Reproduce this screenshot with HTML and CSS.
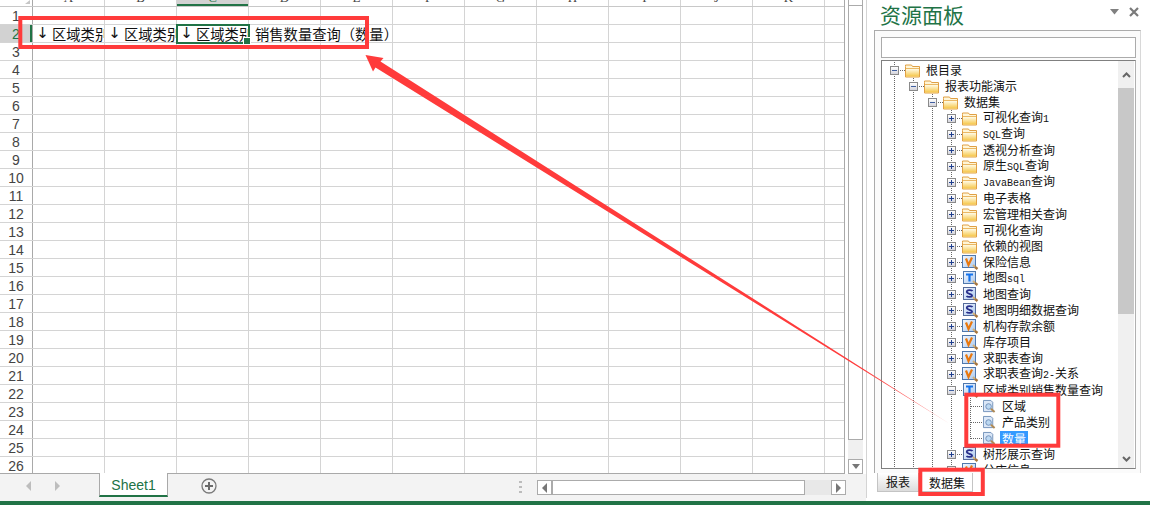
FILE: index.html
```html
<!DOCTYPE html>
<html lang="zh">
<head>
<meta charset="utf-8">
<title>资源面板</title>
<link rel="stylesheet" href="styles.css">
</head>
<body>
<svg class="defs" aria-hidden="true">
  <defs>
    <linearGradient id="fg" x1="0" y1="0" x2="0" y2="1"><stop offset="0" stop-color="#fffbe6"/><stop offset="1" stop-color="#f6c648"/></linearGradient>
    <linearGradient id="bluebg" x1="0" y1="0" x2="1" y2="1"><stop offset="0" stop-color="#f4f8ff"/><stop offset="1" stop-color="#a9c8ee"/></linearGradient>
    <linearGradient id="tail" gradientUnits="userSpaceOnUse" x1="365" y1="55" x2="950" y2="424"><stop offset="0.85" stop-color="#ff3b3b"/><stop offset="1" stop-color="#ff8f8f"/></linearGradient>
    <symbol id="folder" viewBox="0 0 15 15">
      <path d="M.5 3.500V2h6l1 1.500h7v10.500H.5z" fill="#fff6d8" stroke="#e0a045"/>
      <rect x="1" y="6" width="13" height="7.500" fill="url(#fg)"/>
      <path d="M1 5.500h13" stroke="#eab865"/>
    </symbol>
    <symbol id="mag" viewBox="0 0 17 16">
      <path d="M11 11l2 2" stroke="#d2b078" stroke-width="2"/>
      <path d="M13 13l2.500 2" stroke="#a8763c" stroke-width="2.500"/>
    </symbol>
    <symbol id="dv" viewBox="0 0 17 16">
      <rect x=".5" y="1.500" width="13" height="12" fill="url(#bluebg)" stroke="#4f78ad"/>
      <path d="M4 4.500l2.500 6.500 3.500-7.500" fill="none" stroke="#e8780f" stroke-width="2.200"/>
      <use href="#mag"/>
    </symbol>
    <symbol id="dt" viewBox="0 0 17 16">
      <rect x="1.500" y="1.500" width="12" height="12" fill="url(#bluebg)" stroke="#4f78ad"/>
      <path d="M4 4.500h7M7.500 4.500v7" fill="none" stroke="#1473ec" stroke-width="2.200"/>
      <use href="#mag"/>
    </symbol>
    <symbol id="ds" viewBox="0 0 17 16">
      <rect x="1.500" y="1.500" width="12" height="12" fill="url(#bluebg)" stroke="#566c9c"/>
      <path d="M10.500 5c-.5-1-4.500-1.500-5.500 0s1 2.300 2.500 2.800 3 1.400 2.500 2.400-4.500 1.100-5.500-.2" fill="none" stroke="#28308c" stroke-width="1.800"/>
      <use href="#mag"/>
    </symbol>
    <symbol id="field" viewBox="0 0 14 16">
      <path d="M.5 1.500h8l2 2v10h-10z" fill="#dbe7f7" stroke="#6f8fb8"/>
      <circle cx="6" cy="8" r="3" fill="#bcd8f2" stroke="#6f8fb8"/>
      <path d="M8.500 10.500l4 3.500" stroke="#b08a55" stroke-width="2.200"/>
    </symbol>
  </defs>
</svg>

<div class="app">
  <div class="main">
    <section class="workbook">
      <div class="sheet-area">
        <div class="grid">
          <div class="colhead">
            <div class="corner"></div>
            <div class="ch">A</div><div class="ch">B</div><div class="ch active">C</div><div class="ch">D</div><div class="ch">E</div><div class="ch">F</div><div class="ch">G</div><div class="ch">H</div><div class="ch">I</div><div class="ch">J</div><div class="ch">K</div><div class="ch rest"></div>
          </div>
          <div class="rows">
            <div class="row"><div class="rn">1</div><div class="cells"></div></div>
            <div class="row"><div class="rn active">2</div>
              <div class="cells">
                <div class="cell"><span class="clip"><span class="arr">↓</span>区域类别</span></div>
                <div class="cell"><span class="clip"><span class="arr">↓</span>区域类别</span></div>
                <div class="cell current"><span class="clip"><span class="arr">↓</span>区域类别</span><i class="sel"></i></div>
                <div class="cell spill">销售数量查询（数量）</div>
              </div>
            </div>
            <div class="row"><div class="rn">3</div><div class="cells"></div></div>
            <div class="row"><div class="rn">4</div><div class="cells"></div></div>
            <div class="row"><div class="rn">5</div><div class="cells"></div></div>
            <div class="row"><div class="rn">6</div><div class="cells"></div></div>
            <div class="row"><div class="rn">7</div><div class="cells"></div></div>
            <div class="row"><div class="rn">8</div><div class="cells"></div></div>
            <div class="row"><div class="rn">9</div><div class="cells"></div></div>
            <div class="row"><div class="rn">10</div><div class="cells"></div></div>
            <div class="row"><div class="rn">11</div><div class="cells"></div></div>
            <div class="row"><div class="rn">12</div><div class="cells"></div></div>
            <div class="row"><div class="rn">13</div><div class="cells"></div></div>
            <div class="row"><div class="rn">14</div><div class="cells"></div></div>
            <div class="row"><div class="rn">15</div><div class="cells"></div></div>
            <div class="row"><div class="rn">16</div><div class="cells"></div></div>
            <div class="row"><div class="rn">17</div><div class="cells"></div></div>
            <div class="row"><div class="rn">18</div><div class="cells"></div></div>
            <div class="row"><div class="rn">19</div><div class="cells"></div></div>
            <div class="row"><div class="rn">20</div><div class="cells"></div></div>
            <div class="row"><div class="rn">21</div><div class="cells"></div></div>
            <div class="row"><div class="rn">22</div><div class="cells"></div></div>
            <div class="row"><div class="rn">23</div><div class="cells"></div></div>
            <div class="row"><div class="rn">24</div><div class="cells"></div></div>
            <div class="row"><div class="rn">25</div><div class="cells"></div></div>
            <div class="row"><div class="rn">26</div><div class="cells"></div></div>
          </div>
        </div>
        <div class="vscroll">
          <div class="vs-up"></div>
          <div class="vs-thumb"></div>
          <div class="vs-track"></div>
          <div class="sb-btn"><i class="tri down"></i></div>
        </div>
      </div>
      <div class="tabbar">
        <div class="nav"><i class="tri left pale"></i><i class="tri right pale"></i></div>
        <div class="sheet-tab">Sheet1</div>
        <div class="add">
          <svg width="16" height="16" viewBox="0 0 16 16"><circle cx="8" cy="8" r="7" fill="none" stroke="#7a7a7a" stroke-width="1.300"/><path d="M4 8h8M8 4v8" stroke="#6a6a6a" stroke-width="2"/></svg>
        </div>
        <div class="split"><i></i><i></i><i></i></div>
        <div class="hscroll">
          <div class="sb-btn"><i class="tri left"></i></div>
          <div class="hs-thumb"></div>
          <div class="hs-track"></div>
          <div class="sb-btn"><i class="tri right"></i></div>
        </div>
      </div>
    </section>

    <aside class="panel">
      <header class="panel-head">
        <h1 class="panel-title">资源面板</h1>
        <div class="panel-tools">
          <svg width="10" height="6" viewBox="0 0 10 6"><path d="M0 0h9L4.500 5.500z" fill="#808080"/></svg>
          <svg width="10" height="10" viewBox="0 0 10 10"><path d="M1 1l8 8M9 1l-8 8" stroke="#7a7a7a" stroke-width="2.200"/></svg>
        </div>
      </header>
      <div class="panel-box">
        <div class="search"></div>
        <div class="tree">
          <div class="tree-list">
            <div class="node"><span class="tw"><b class="exp minus"></b></span><span class="conn"></span><svg class="ic"><use href="#folder"/></svg><span class="lb">根目录</span></div>
            <div class="node"><span class="g"></span><span class="tw"><b class="exp minus"></b></span><span class="conn"></span><svg class="ic"><use href="#folder"/></svg><span class="lb">报表功能演示</span></div>
            <div class="node"><span class="g"></span><span class="g"></span><span class="tw"><b class="exp minus"></b></span><span class="conn"></span><svg class="ic"><use href="#folder"/></svg><span class="lb">数据集</span></div>
            <div class="node"><span class="g"></span><span class="g"></span><span class="g"></span><span class="tw"><b class="exp"></b></span><span class="conn"></span><svg class="ic"><use href="#folder"/></svg><span class="lb">可视化查询<span class="lat">1</span></span></div>
            <div class="node"><span class="g"></span><span class="g"></span><span class="g"></span><span class="tw"><b class="exp"></b></span><span class="conn"></span><svg class="ic"><use href="#folder"/></svg><span class="lb"><span class="lat">SQL</span>查询</span></div>
            <div class="node"><span class="g"></span><span class="g"></span><span class="g"></span><span class="tw"><b class="exp"></b></span><span class="conn"></span><svg class="ic"><use href="#folder"/></svg><span class="lb">透视分析查询</span></div>
            <div class="node"><span class="g"></span><span class="g"></span><span class="g"></span><span class="tw"><b class="exp"></b></span><span class="conn"></span><svg class="ic"><use href="#folder"/></svg><span class="lb">原生<span class="lat">SQL</span>查询</span></div>
            <div class="node"><span class="g"></span><span class="g"></span><span class="g"></span><span class="tw"><b class="exp"></b></span><span class="conn"></span><svg class="ic"><use href="#folder"/></svg><span class="lb"><span class="lat">JavaBean</span>查询</span></div>
            <div class="node"><span class="g"></span><span class="g"></span><span class="g"></span><span class="tw"><b class="exp"></b></span><span class="conn"></span><svg class="ic"><use href="#folder"/></svg><span class="lb">电子表格</span></div>
            <div class="node"><span class="g"></span><span class="g"></span><span class="g"></span><span class="tw"><b class="exp"></b></span><span class="conn"></span><svg class="ic"><use href="#folder"/></svg><span class="lb">宏管理相关查询</span></div>
            <div class="node"><span class="g"></span><span class="g"></span><span class="g"></span><span class="tw"><b class="exp"></b></span><span class="conn"></span><svg class="ic"><use href="#folder"/></svg><span class="lb">可视化查询</span></div>
            <div class="node"><span class="g"></span><span class="g"></span><span class="g"></span><span class="tw"><b class="exp"></b></span><span class="conn"></span><svg class="ic"><use href="#folder"/></svg><span class="lb">依赖的视图</span></div>
            <div class="node"><span class="g"></span><span class="g"></span><span class="g"></span><span class="tw"><b class="exp"></b></span><span class="conn"></span><svg class="ic data"><use href="#dv"/></svg><span class="lb">保险信息</span></div>
            <div class="node"><span class="g"></span><span class="g"></span><span class="g"></span><span class="tw"><b class="exp"></b></span><span class="conn"></span><svg class="ic data"><use href="#dt"/></svg><span class="lb">地图<span class="lat">sql</span></span></div>
            <div class="node"><span class="g"></span><span class="g"></span><span class="g"></span><span class="tw"><b class="exp"></b></span><span class="conn"></span><svg class="ic data"><use href="#ds"/></svg><span class="lb">地图查询</span></div>
            <div class="node"><span class="g"></span><span class="g"></span><span class="g"></span><span class="tw"><b class="exp"></b></span><span class="conn"></span><svg class="ic data"><use href="#ds"/></svg><span class="lb">地图明细数据查询</span></div>
            <div class="node"><span class="g"></span><span class="g"></span><span class="g"></span><span class="tw"><b class="exp"></b></span><span class="conn"></span><svg class="ic data"><use href="#dv"/></svg><span class="lb">机构存款余额</span></div>
            <div class="node"><span class="g"></span><span class="g"></span><span class="g"></span><span class="tw"><b class="exp"></b></span><span class="conn"></span><svg class="ic data"><use href="#dv"/></svg><span class="lb">库存项目</span></div>
            <div class="node"><span class="g"></span><span class="g"></span><span class="g"></span><span class="tw"><b class="exp"></b></span><span class="conn"></span><svg class="ic data"><use href="#dv"/></svg><span class="lb">求职表查询</span></div>
            <div class="node"><span class="g"></span><span class="g"></span><span class="g"></span><span class="tw"><b class="exp"></b></span><span class="conn"></span><svg class="ic data"><use href="#dv"/></svg><span class="lb">求职表查询<span class="lat">2-</span>关系</span></div>
            <div class="node"><span class="g"></span><span class="g"></span><span class="g"></span><span class="tw"><b class="exp minus"></b></span><span class="conn"></span><svg class="ic data"><use href="#dt"/></svg><span class="lb">区域类别销售数量查询</span></div>
            <div class="node"><span class="g"></span><span class="g"></span><span class="g"></span><span class="g"></span><span class="g leaf"></span><svg class="ic small"><use href="#field"/></svg><span class="lb">区域</span></div>
            <div class="node"><span class="g"></span><span class="g"></span><span class="g"></span><span class="g"></span><span class="g leaf"></span><svg class="ic small"><use href="#field"/></svg><span class="lb">产品类别</span></div>
            <div class="node"><span class="g"></span><span class="g"></span><span class="g"></span><span class="g"></span><span class="g leaf end"></span><svg class="ic small"><use href="#field"/></svg><span class="lb selected">数量</span></div>
            <div class="node"><span class="g"></span><span class="g"></span><span class="g"></span><span class="tw"><b class="exp"></b></span><span class="conn"></span><svg class="ic data"><use href="#ds"/></svg><span class="lb">树形展示查询</span></div>
            <div class="node"><span class="g"></span><span class="g"></span><span class="g"></span><span class="tw"><b class="exp"></b></span><span class="conn"></span><svg class="ic data"><use href="#dv"/></svg><span class="lb">分店信息</span></div>
          </div>
          <div class="tree-scroll">
            <div class="ts-btn"><svg width="9" height="6" viewBox="0 0 9 6"><path d="M1 5l3.500-3.500L8 5" fill="none" stroke="#666" stroke-width="2"/></svg></div>
            <div class="ts-thumb"></div>
            <div class="ts-rest"></div>
            <div class="ts-btn low"><svg width="9" height="6" viewBox="0 0 9 6"><path d="M1 1l3.500 3.500L8 1" fill="none" stroke="#666" stroke-width="2"/></svg></div>
          </div>
        </div>
      </div>
      <div class="panel-tabs">
        <div class="ptab">报表</div>
        <div class="ptab on">数据集</div>
      </div>
    </aside>
  </div>
  <div class="status"></div>

  <svg class="marks" width="1150" height="505" viewBox="0 0 1150 505" aria-hidden="true">
    <rect class="mark" x="20.300" y="18" width="346.700" height="29"/>
    <rect class="mark" x="966.300" y="394.700" width="92" height="51"/>
    <rect class="mark" x="920.300" y="469.700" width="62.500" height="24.300"/>
    <path d="M365.500 55L383.500 58l-3 3.500L950 424 375.500 67.500 373 71.500z" fill="url(#tail)"/>
  </svg>
</div>
</body>
</html>
```

FILE: styles.css
```css
* { box-sizing: border-box; }
html, body { margin: 0; padding: 0; background: #fff; }
body { font-family: "Noto Sans CJK SC", "Liberation Sans", sans-serif; color: #111; }
.defs { position: absolute; width: 0; height: 0; }

.app { position: relative; width: 1150px; height: 505px; overflow: hidden; display: flex; flex-direction: column; }
.main { display: flex; height: 501px; }
.status { height: 4px; background: #217346; }
.marks { position: absolute; left: 0; top: 0; pointer-events: none; }
.mark { fill: none; stroke: #ff3b3b; stroke-width: 4; }

/* workbook */
.workbook { width: 866px; display: flex; flex-direction: column; background: #f3f3f3; }
.sheet-area { height: 474px; display: flex; background: #fff; }
.grid { width: 845px; height: 474px; overflow: hidden; border-right: 1px solid #a9a9a9; border-bottom: 1px solid #a9a9a9; }
.colhead { display: flex; height: 7px; overflow: hidden; background: #fff; border-bottom: 1px solid #c8c8c8; }
.corner { width: 33px; flex: none; border-right: 1px solid #a9a9a9; position: relative; }
.corner::after { content: ""; position: absolute; right: 2px; top: 0; border-style: solid; border-width: 0 0 4px 5px; border-color: transparent transparent #c6c6c6 transparent; }
.ch { width: 72px; flex: none; height: 6px; display: flex; align-items: flex-end; justify-content: center; border-right: 1px solid #d4d4d4; font: 13px/12px "Liberation Serif", serif; color: #444; padding-bottom: 2px; }
.ch.rest { width: 20px; border-right: 0; }
.ch.active { background: #d2d2d2; color: #217346; box-shadow: inset 0 -2px 0 #217346; }

.row { display: flex; height: 18px; border-bottom: 1px solid #d4d4d4; }
.rn { width: 33px; flex: none; border-right: 1px solid #a9a9a9; text-align: center; font: 14px/18px "Liberation Sans", sans-serif; color: #444; background: #fff; }
.rn.active { background: #d2d2d2; color: #217346; box-shadow: inset -2px 0 0 #217346; }
.cells { flex: 1; display: flex; background: repeating-linear-gradient(90deg, transparent 0 71px, #d4d4d4 71px 72px); }
.cell { position: relative; flex: none; width: 72px; white-space: nowrap; font-size: 14.3px; line-height: 18px; color: #111; }
.clip { display: block; width: 71px; height: 17px; overflow: hidden; }
.arr { display: inline-block; width: 19px; text-align: center; font: 15px/17px "DejaVu Sans", sans-serif; vertical-align: top; }
.cell.spill { padding-left: 6px; }
.sel { position: absolute; left: -1px; top: -1px; width: 74px; height: 20px; border: 2px solid #217346; }
.sel::after { content: ""; position: absolute; right: -3px; bottom: -3px; width: 6px; height: 6px; background: #217346; border: 1px solid #fff; }

/* scrollbars */
.vscroll { width: 15px; margin-left: 3px; height: 474px; display: flex; flex-direction: column; }
.vs-up { height: 6px; border: 1px solid #ababab; border-top: 0; background: #fff; }
.vs-thumb { height: 434px; border: 1px solid #ababab; border-top: 0; background: #fff; }
.vs-track { flex: 1; background: #f0f0f0; }
.sb-btn { width: 15px; height: 15px; flex: none; border: 1px solid #ababab; background: #fff; display: flex; align-items: center; justify-content: center; }
.tri { display: block; width: 0; height: 0; border-style: solid; }
.tri.down { border-width: 5px 4px 0 4px; border-color: #777 transparent transparent transparent; }
.tri.left { border-width: 5px 5px 5px 0; border-color: transparent #777 transparent transparent; }
.tri.right { border-width: 5px 0 5px 5px; border-color: transparent transparent transparent #777; }
.tri.left.pale { border-color: transparent #bdbdbd transparent transparent; }
.tri.right.pale { border-color: transparent transparent transparent #bdbdbd; }

/* tab bar */
.tabbar { height: 27px; display: flex; align-items: flex-start; }
.nav { width: 99px; height: 24px; flex: none; display: flex; align-items: center; gap: 24px; padding-left: 26px; }
.sheet-tab { width: 69px; height: 24px; flex: none; margin-top: -1px; background: #fff; border-left: 1px solid #a9a9a9; border-right: 1px solid #a9a9a9; border-bottom: 2px solid #217346; text-align: center; font: 14px/24px "Liberation Sans", sans-serif; color: #217346; }
.add { width: 16px; height: 16px; flex: none; margin: 4px 0 0 33px; }
.add svg { display: block; }
.split { width: 3px; height: 12px; flex: none; margin: 7px 0 0 302px; display: flex; flex-direction: column; justify-content: space-between; }
.split i { display: block; height: 2px; background: #bcbcbc; }
.hscroll { width: 309px; height: 15px; flex: none; margin: 6px 0 0 15px; display: flex; }
.hs-thumb { width: 253px; border: 1px solid #ababab; background: #fff; }
.hs-track { flex: 1; background: #e8e8e8; }

/* panel */
.panel { width: 284px; height: 498px; border-left: 1px solid #d4d4d4; background: #fff; position: relative; display: flex; flex-direction: column; padding: 0 9px 0 7px; }
.panel-head { height: 30px; display: flex; justify-content: space-between; padding: 0 2px 0 6px; }
.panel-title { margin: 0; font-size: 21px; font-weight: 400; line-height: 29px; color: #217346; }
.panel-tools { display: flex; align-items: center; gap: 9px; height: 24px; }
.panel-box { height: 443px; border: 1px solid #ababab; border-right-color: #d8d8d8; border-bottom: 0; padding: 6px 4px 5px 6px; background: #fbfbfb; }
.search { height: 21px; border: 1px solid #ababab; background: #fff; margin-bottom: 2px; }
.tree { height: 409px; border: 1px solid #808080; border-right-color: #b0b0b0; background: #fff; display: flex; overflow: hidden; }
.tree-list { flex: 1; min-width: 0; padding: 1px 0 0 8px; overflow: hidden; }
.node { display: flex; align-items: center; height: 16px; white-space: nowrap; font-size: 12px; line-height: 16px; color: #111; }
.g { width: 19px; height: 16px; flex: none; background: repeating-linear-gradient(#666 0 1px, transparent 1px 2px) 4px 0 / 1px 100% no-repeat; }
.g.leaf { width: 17px; position: relative; }
.g.leaf::after { content: ""; position: absolute; left: 5px; top: 8px; width: 12px; height: 1px; background: repeating-linear-gradient(90deg, #666 0 1px, transparent 1px 2px); }
.g.end { background-size: 1px 9px; }
.tw { width: 10px; height: 16px; flex: none; display: flex; align-items: center; background: repeating-linear-gradient(#666 0 1px, transparent 1px 2px) 4px 0 / 1px 100% no-repeat; }
.exp { display: block; width: 9px; height: 9px; border: 1px solid #8a8a8a; background: linear-gradient(#1f3f8f, #1f3f8f) center / 5px 1px no-repeat, linear-gradient(#1f3f8f, #1f3f8f) center / 1px 5px no-repeat, linear-gradient(#fff, #d4d4dc); }
.exp.minus { background: linear-gradient(#3f5f9f, #3f5f9f) center / 5px 1px no-repeat, linear-gradient(#fff, #d4d4dc); }
.conn { width: 5px; height: 1px; flex: none; background: repeating-linear-gradient(90deg, #666 0 1px, transparent 1px 2px); }
.ic { width: 15px; height: 15px; flex: none; display: block; overflow: visible; }
.ic.data { width: 17px; height: 16px; margin-right: -2px; }
.ic.small { width: 13px; height: 15px; }
.lb { margin-left: 6px; }
.lb.selected { margin-left: 4px; padding: 0 2px; background: #3399ff; color: #fff; line-height: 15px; }
.lat { font-family: "Liberation Mono", monospace; font-size: 10px; }
.tree-scroll { width: 16px; flex: none; margin-right: 1px; background: #f0f0f0; display: flex; flex-direction: column; }
.ts-btn { height: 27px; display: flex; align-items: center; justify-content: center; flex: none; }
.ts-btn.low { height: 18px; }
.ts-thumb { height: 226px; flex: none; background: #c8c8c8; }
.ts-rest { flex: 1; }
.panel-tabs { display: flex; gap: 2px; height: 25px; margin-left: 3px; align-items: flex-start; }
.ptab { font-size: 12px; line-height: 18px; height: 19px; width: 42px; text-align: center; border: 1px solid #c4c4c4; border-top: 0; background: linear-gradient(#fff, #dcdcdc); }
.ptab.on { width: 52px; background: #fff; padding-top: 1px; }
```
